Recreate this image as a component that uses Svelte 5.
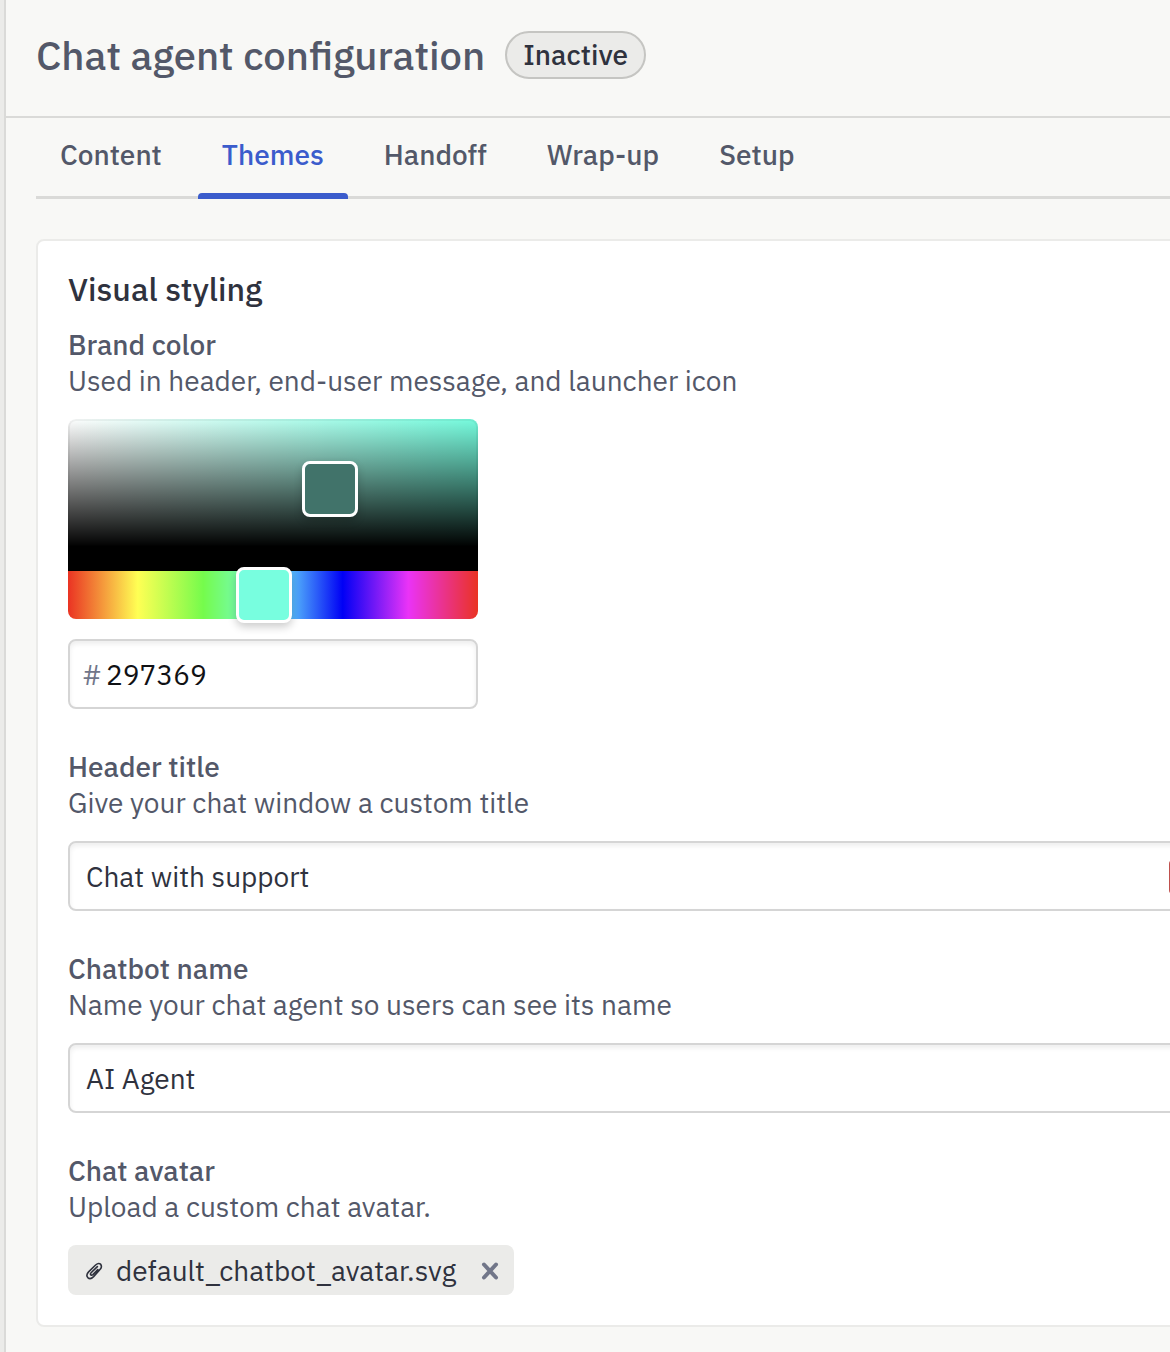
<script>
    const tabs = ["Content", "Themes", "Handoff", "Wrap-up", "Setup"];

    let activeTab = "Themes";
    let hue = 171;
    let hex = "297369";
    let saturation = 64;
    let brightness = 45;
    let headerTitle = "Chat with support";
    let chatbotName = "AI Agent";
    let avatarFile = "default_chatbot_avatar.svg";
</script>

<div class="page">
    <header class="page-header">
        <h1>Chat agent configuration</h1>
        <span class="badge">Inactive</span>
    </header>

    <main>
        <nav class="tabs">
            {#each tabs as tab}
                <button type="button" class="tab" class:active={tab === activeTab} on:click={() => (activeTab = tab)}>
                    {tab}
                </button>
            {/each}
        </nav>

        <section class="card">
            <h2>Visual styling</h2>

            <div class="field">
                <label for="brand-color">Brand color</label>
                <p>Used in header, end-user message, and launcher icon</p>
                <div class="picker">
                    <div class="shade">
                        <div class="shade-area">
                            <button
                                type="button"
                                class="handle"
                                aria-label="Saturation and brightness"
                                style="left: {saturation}%; top: {100 - brightness}%"
                            ></button>
                        </div>
                    </div>
                    <input class="hue" type="range" min="0" max="360" aria-label="Hue" bind:value={hue} />
                </div>
                <div class="text-box hex-box">
                    <span class="hash">#</span>
                    <input id="brand-color" type="text" maxlength="6" bind:value={hex} />
                </div>
            </div>

            <div class="field">
                <label for="header-title">Header title</label>
                <p>Give your chat window a custom title</p>
                <div class="text-box">
                    <input id="header-title" type="text" bind:value={headerTitle} />
                    <button type="button" class="fill" aria-label="Autofill"></button>
                </div>
            </div>

            <div class="field">
                <label for="chatbot-name">Chatbot name</label>
                <p>Name your chat agent so users can see its name</p>
                <div class="text-box">
                    <input id="chatbot-name" type="text" bind:value={chatbotName} />
                </div>
            </div>

            <div class="field">
                <h3>Chat avatar</h3>
                <p>Upload a custom chat avatar.</p>
                {#if avatarFile}
                    <div class="file">
                        <svg class="clip" viewBox="0 0 18 20" aria-hidden="true">
                            <path d="M12.8 8.6 L7.9 13.6 Q6.7 14.6 5.8 13.8 Q5 12.8 6.1 11.7 L12.4 5.6 M15.6 7.8 L8.6 15.6 Q5.3 19 2.8 16.6 Q0.6 14 3.6 10.9 L10.6 4 Q13.5 1.4 15.6 3.2 Q17.2 5.4 15.6 7.8" />
                        </svg>
                        <span class="file-name">{avatarFile}</span>
                        <button type="button" class="remove" aria-label="Remove file" on:click={() => (avatarFile = "")}>
                            <svg viewBox="0 0 18 20" aria-hidden="true">
                                <path d="M3 3.5 L15 16.5 M15 3.5 L3 16.5" />
                            </svg>
                        </button>
                    </div>
                {/if}
            </div>
        </section>
    </main>
</div>

<style>
    :global(body) {
        background-color: #f8f8f6;
    }

    .page {
        box-sizing: border-box;
        min-height: 100vh;
        overflow: hidden;
        border-left: 2px solid #dadad8;
        margin-left: 4px;
        box-shadow: -4px 0 0 #ebebe9;
        background-color: #f8f8f6;
        color: #535869;
        font-family: "IBM Plex Sans", Roboto, sans-serif;
        font-size: 28px;
        line-height: 36px;
    }

    h1,
    h2,
    h3,
    p {
        margin: 0;
    }

    button,
    input {
        padding: 0;
        border: 0;
        background: none;
        color: inherit;
        font: inherit;
    }

    /* Header */
    .page-header {
        display: flex;
        align-items: center;
        gap: 20px;
        padding: 31px 30px 37px;
        border-bottom: 2px solid #dadad8;
    }

    h1 {
        font-size: 40px;
        font-weight: 500;
        line-height: 48px;
    }

    .badge {
        padding: 4px 16px;
        border: 2px solid #c5c5c2;
        border-radius: 24px;
        background-color: #ebebe9;
        color: #2f323e;
        font-weight: 500;
    }

    /* The content column is wider than the window and gets clipped */
    main {
        width: calc(100% + 56px);
        box-sizing: border-box;
        padding: 0 0 25px 30px;
    }

    /* Tabs */
    .tabs {
        display: flex;
        gap: 12px;
        height: 81px;
        box-shadow: inset 0 -3px 0 #dadad8;
    }

    .tab {
        position: relative;
        padding: 0 24px 8px;
        font-weight: 500;
    }

    .tab.active {
        color: #3b5ccc;
    }

    .tab.active::after {
        content: "";
        position: absolute;
        right: 0;
        bottom: 0;
        left: 0;
        height: 6px;
        border-radius: 4px 4px 0 0;
        background-color: #3b5ccc;
    }

    /* Card */
    .card {
        display: flex;
        flex-direction: column;
        gap: 40px;
        margin-top: 40px;
        padding: 30px;
        border: 2px solid #ebebe9;
        border-radius: 8px;
        background-color: #fff;
    }

    h2 {
        margin-bottom: -20px;
        color: #2f323e;
        font-size: 32px;
        font-weight: 500;
        line-height: 36px;
    }

    .field {
        display: flex;
        flex-direction: column;
    }

    label,
    h3 {
        font-size: 28px;
        font-weight: 500;
    }

    .text-box {
        box-sizing: border-box;
        display: flex;
        align-items: center;
        height: 70px;
        margin-top: 20px;
        padding: 2px 16px 0;
        border: 2px solid #d5d5d5;
        border-radius: 8px;
        box-shadow: inset 0 3px 5px rgba(0, 0, 0, 0.07);
        color: #2f323e;
    }

    .text-box input {
        flex: 1;
        min-width: 0;
        height: 36px;
        outline: none;
    }

    .hex-box {
        max-width: 410px;
        gap: 4px;
        padding: 2px 12px 0;
        color: #101114;
    }

    .hash {
        color: #717689;
    }

    .fill {
        width: 26px;
        height: 34px;
        margin-right: -19px;
        border-radius: 4px;
        background-color: #c0504d;
    }

    /* Color picker */
    .picker {
        max-width: 410px;
        margin-top: 20px;
    }

    .shade {
        border-bottom: 24px solid #000;
    }

    .shade-area {
        position: relative;
        height: 128px;
        border-radius: 8px 8px 0 0;
        background-color: #75fbdd;
        background-image: linear-gradient(to top, #000, transparent), linear-gradient(to right, #fff, rgba(255, 255, 255, 0));
        box-shadow: inset 0 0 0 2px rgba(0, 0, 0, 0.05);
    }

    .handle {
        position: absolute;
        box-sizing: border-box;
        width: 56px;
        height: 56px;
        transform: translate(-50%, -50%);
        border: 3px solid #fff;
        border-radius: 8px;
        background-color: #41736a;
        box-shadow: 0 4px 8px rgba(0, 0, 0, 0.2);
    }

    .hue {
        display: block;
        width: 100%;
        height: 48px;
        margin: 0;
        appearance: none;
        border-radius: 0 0 8px 8px;
        background: linear-gradient(to right, #ea3323 0%, #ffff54 17%, #75fb4c 33%, #75fbfd 50%, #0000f5 67%, #ea33f7 83%, #ea3323 100%);
    }

    .hue::-webkit-slider-thumb {
        appearance: none;
        box-sizing: border-box;
        width: 56px;
        height: 56px;
        border: 3px solid #fff;
        border-radius: 8px;
        background-color: #78fedf;
        box-shadow: 0 4px 8px rgba(0, 0, 0, 0.2);
    }

    /* Uploaded file */
    .file {
        box-sizing: border-box;
        display: flex;
        align-items: center;
        align-self: flex-start;
        height: 50px;
        margin-top: 20px;
        padding: 2px 15px 0 17px;
        border-radius: 8px;
        background-color: #ebebe9;
        color: #2f323e;
    }

    .file svg {
        display: block;
        width: 18px;
        height: 20px;
        fill: none;
        stroke-linecap: round;
    }

    .clip {
        stroke: #2f323e;
        stroke-width: 1.6;
    }

    .file-name {
        margin: 0 25px 0 13px;
    }

    .remove svg {
        stroke: #717689;
        stroke-width: 4;
    }
</style>
